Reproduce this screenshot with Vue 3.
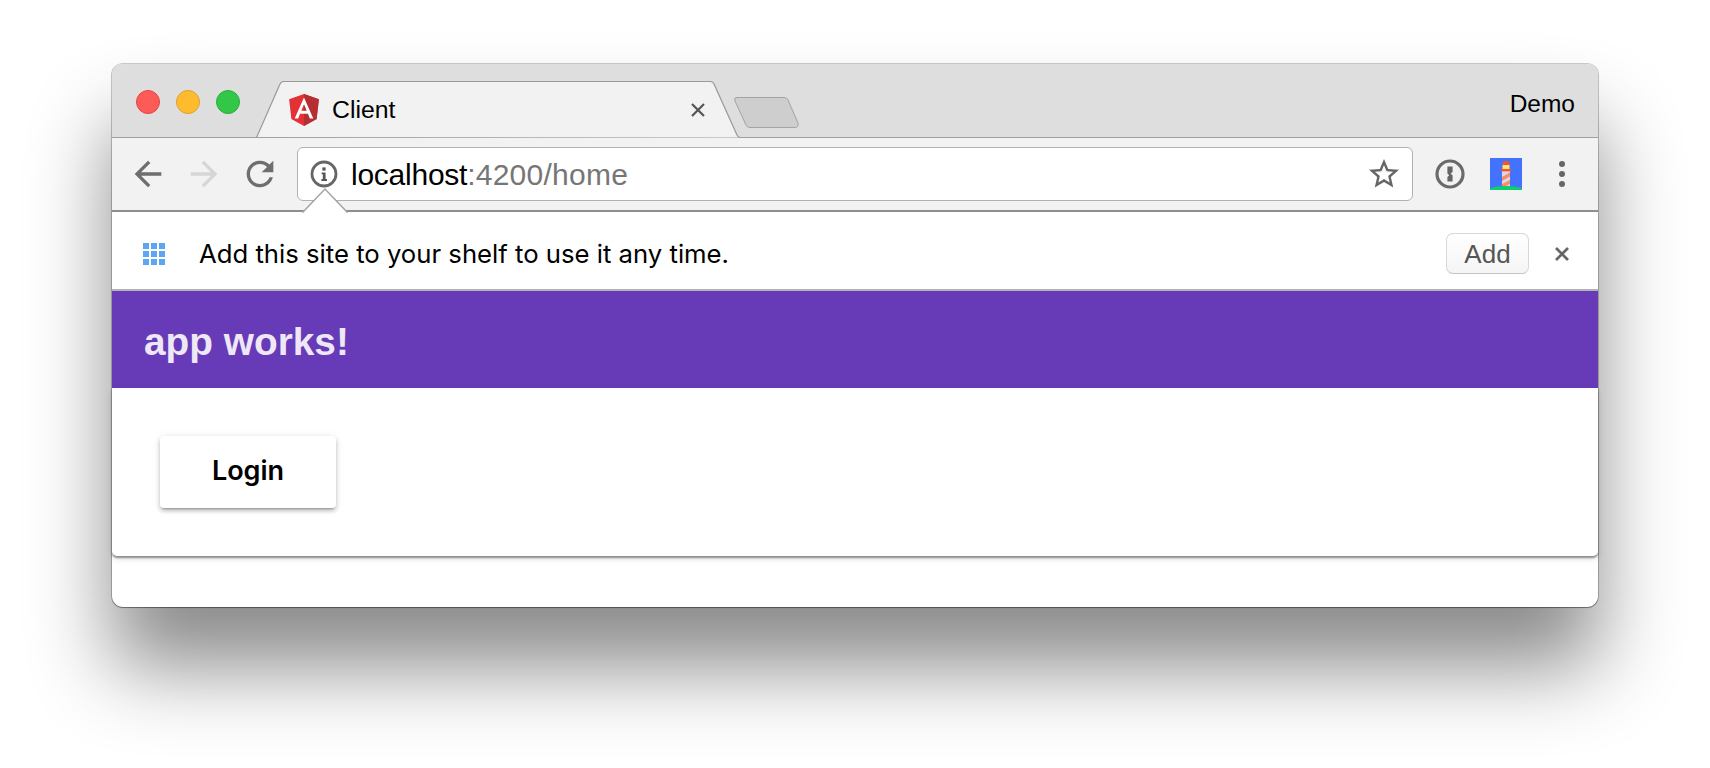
<script setup>
const cells = [0, 1, 2, 3, 4, 5, 6, 7, 8]
</script>

<template>
  <div class="page">
    <div class="window">
      <header class="titlebar">
        <div class="lights">
          <span class="light red"></span>
          <span class="light yellow"></span>
          <span class="light green"></span>
        </div>
        <div class="tab">
          <svg class="tab-shape" width="484" height="57" viewBox="0 0 484 57">
            <path d="M0 56 Q.5 56 1 55.5 L24 3 Q25 .5 28 .5 H454 Q457 .5 458 3 L481 54 Q482 56 484 56.5" fill="#f2f2f2" stroke="#999" stroke-width="1.2" />
          </svg>
          <svg class="angular" width="30" height="32" viewBox="31.9 30 186.2 200">
            <polygon fill="#e23237" points="125,30 31.9,63.2 46.1,186.3 125,230 203.9,186.3 218.1,63.2" />
            <polygon fill="#b52e31" points="125,30 125,230 203.9,186.3 218.1,63.2" />
            <path fill="#fff" d="M125 52.1L66.8 182.6h21.7l11.7-29.2h49.4l11.7 29.2h21.7L125 52.1zM142 135.4H108l17-40.9L142 135.4z" />
          </svg>
          <span class="tab-title">Client</span>
          <svg class="tab-close" width="16" height="16" viewBox="0 0 16 16">
            <path d="M2 2L14 14M14 2L2 14" stroke="#555" stroke-width="2.2" fill="none" />
          </svg>
        </div>
        <svg class="newtab" width="65" height="31" viewBox="0 0 65 31">
          <path d="M2 .5 H50 Q53 .5 54 3 L64 26 Q65 30.5 61 30.5 H16 Q13 30.5 12 28 L1 4 Q0 .5 2 .5Z" fill="#cecece" stroke="#a3a3a3" stroke-width="1" />
        </svg>
        <span class="profile">Demo</span>
      </header>

      <div class="toolbar">
        <svg class="nav" width="40" height="40" viewBox="0 0 24 24" fill="#6e6e6e">
          <path d="M20 11H7.83l5.59-5.59L12 4l-8 8 8 8 1.41-1.41L7.83 13H20v-2z" />
        </svg>
        <svg class="nav gap16" width="40" height="40" viewBox="0 0 24 24" fill="#d6d6d6">
          <path d="M4 11h12.17l-5.59-5.59L12 4l8 8-8 8-1.41-1.41L16.17 13H4v-2z" />
        </svg>
        <svg class="nav gap16" width="40" height="40" viewBox="0 0 24 24" fill="#6e6e6e">
          <path d="M17.65 6.35C16.2 4.9 14.21 4 12 4c-4.42 0-7.99 3.58-7.99 8s3.57 8 7.99 8c3.73 0 6.84-2.55 7.73-6h-2.08c-.82 2.33-3.04 4-5.65 4-3.31 0-6-2.69-6-6s2.69-6 6-6c1.66 0 3.14.69 4.22 1.78L13 11h7V4l-2.35 2.35z" />
        </svg>
        <div class="omnibox">
          <svg class="info" width="30" height="30" viewBox="0 0 30 30">
            <circle cx="15" cy="15" r="12" fill="#fff" stroke="#666" stroke-width="2.8" />
            <rect x="13.4" y="8.4" width="3.2" height="3.2" fill="#555" />
            <path d="M12.6 13.4H16.6V20H18V22H12.4V20H13.8V15.2H12.6Z" fill="#555" />
          </svg>
          <span class="url">localhost<span class="url-dim">:4200/home</span></span>
          <svg class="star" width="36" height="36" viewBox="0 0 24 24" fill="#666">
            <path d="M22 9.24l-7.19-.62L12 2 9.19 8.63 2 9.24l5.46 4.73L5.82 21 12 17.27 18.18 21l-1.63-7.03L22 9.24zM12 15.4l-3.76 2.27 1-4.28-3.32-2.88 4.38-.38L12 6.1l1.71 4.04 4.38.38-3.32 2.88 1 4.28L12 15.4z" />
          </svg>
        </div>
        <svg class="onepass" width="30" height="30" viewBox="0 0 30 30">
          <circle cx="15" cy="15" r="13" fill="none" stroke="#6a6a6a" stroke-width="3.2" />
          <path d="M12.4 7.5H17.6V13L15.6 14.6L17.6 16.4V22.5H12.4V18L14.2 16.2L12.4 14.6Z" fill="#666" />
        </svg>
        <svg class="lighthouse" width="32" height="32" viewBox="0 0 32 32">
          <rect width="32" height="32" fill="#4372ff" />
          <ellipse cx="16" cy="36" rx="22" ry="8" fill="#0cce6b" />
          <rect x="12" y="13" width="8" height="15" fill="#d5d9f5" />
          <path d="M12 19L20 14.5V18.5L12 23Z M12 26L20 22V26L16 28H12Z" fill="#ff8a5c" />
          <path d="M12.5 5.5Q12.5 3 16 3T19.5 5.5V7H12.5Z" fill="#f4581e" />
          <rect x="12.5" y="7" width="7" height="4" fill="#ffe07d" />
          <rect x="11" y="11" width="10" height="2.4" fill="#f4581e" />
        </svg>
        <div class="dots"><i></i><i></i><i></i></div>
        <svg class="pointer" width="46" height="25" viewBox="0 0 46 25">
          <path d="M0 24.5 H1 L23 1 L45 24.5 H46 V25 H0Z" fill="#fff" />
          <path d="M0 24 H1 L23 1 L45 24 H46" fill="none" stroke="#a3a3a3" stroke-width="1.4" />
        </svg>
      </div>

      <div class="shelf">
        <svg class="grid" width="22" height="22" viewBox="0 0 22 22">
          <rect v-for="c in cells" :key="c" :x="(c % 3) * 8" :y="Math.floor(c / 3) * 8" width="6" height="6" fill="#5ea5f6" />
        </svg>
        <span class="shelf-text">Add this site to your shelf to use it any time.</span>
        <button class="add">Add</button>
        <svg class="shelf-close" width="16" height="16" viewBox="0 0 16 16">
          <path d="M2 2L14 14M14 2L2 14" stroke="#666" stroke-width="2.7" fill="none" />
        </svg>
      </div>

      <div class="appbar">app works!</div>

      <main class="card">
        <button class="login">Login</button>
      </main>
      <div class="footer"></div>
    </div>
  </div>
</template>

<style>
html, body { margin: 0; background: #fff; overflow: hidden; }
</style>

<style scoped>
.page {
  height: 768px;
  box-sizing: border-box;
  padding: 64px 0 0 112px;
  background: #fff;
  font-family: "Liberation Sans", Arial, sans-serif;
  color: #000;
  overflow: hidden;
}
.window {
  width: 1486px;
  height: 543px;
  border-radius: 11px;
  background: #fff;
  display: flex;
  flex-direction: column;
  box-shadow: 0 0 0 1px rgba(0, 0, 0, .2), 0 1px 1px rgba(0, 0, 0, .3), 0 60px 82px rgba(0, 0, 0, .46);
  position: relative;
}
.titlebar {
  height: 74px;
  box-sizing: border-box;
  flex: none;
  display: flex;
  background: #dedede;
  border-bottom: 1px solid #a0a0a0;
  border-radius: 11px 11px 0 0;
}
.lights { display: flex; gap: 16px; margin: 26px 0 0 24px; align-self: flex-start; }
.light { width: 24px; height: 24px; box-sizing: border-box; border-radius: 50%; border: 1px solid; }
.red { background: #fc5b57; border-color: #e5443f; }
.yellow { background: #ffbb2e; border-color: #e0a028; }
.green { background: #33c748; border-color: #2aae3c; }
.tab {
  position: relative;
  width: 484px;
  height: 57px;
  flex: none;
  margin: 17px 0 -1px 16px;
  box-sizing: border-box;
  padding: 0 34px 0 33px;
  display: flex;
  align-items: center;
}
.tab-shape { position: absolute; left: 0; top: 0; }
.angular, .tab-title, .tab-close { position: relative; }
.tab-title { margin-left: 13px; font-size: 24.8px; line-height: 32px; }
.tab-close { margin-left: auto; }
.newtab { flex: none; margin: 33px 0 0 -6px; }
.profile { margin: 26px 23px 0 auto; font-size: 24.5px; line-height: 28px; align-self: flex-start; }
.toolbar {
  position: relative;
  height: 74px;
  box-sizing: border-box;
  flex: none;
  display: flex;
  align-items: center;
  padding: 0 16px 1px;
  background: #f2f2f2;
  border-bottom: 2px solid #8e8e8e;
}
.gap16 { margin-left: 16px; }
.nav { flex: none; }
.omnibox {
  flex: none;
  width: 1116px;
  height: 54px;
  box-sizing: border-box;
  margin-left: 17px;
  padding: 0 10px 0 11px;
  display: flex;
  align-items: center;
  background: #fff;
  border: 1px solid #b2b2b2;
  border-radius: 6px;
}
.url { margin: 2px 0 0 12px; font-size: 30px; line-height: 36px; letter-spacing: -.25px; }
.url-dim { color: #767676; letter-spacing: .25px; }
.star { margin-left: auto; }
.onepass { flex: none; margin-left: 22px; }
.lighthouse { flex: none; margin-left: 25px; }
.dots { margin-left: 37px; display: flex; flex-direction: column; gap: 4px; }
.dots i { width: 6px; height: 6px; border-radius: 50%; background: #666; display: block; }
.pointer { position: absolute; left: 190px; top: 50px; }
.shelf {
  height: 79px;
  box-sizing: border-box;
  flex: none;
  display: flex;
  align-items: center;
  padding: 6px 28px 0 31px;
  border-bottom: 2px solid #b4b4b4;
}
.shelf-text { margin-left: 34px; font-family: Inter, "Liberation Sans", sans-serif; font-size: 25.7px; line-height: 32px; }
.add {
  margin-left: auto;
  width: 83px;
  height: 41px;
  padding: 2px 0 0;
  background: linear-gradient(#fff, #f5f5f5);
  border: 1px solid #d8d8d8;
  border-bottom-color: #c4c4c4;
  border-radius: 7px;
  font: 26px "Liberation Sans", Arial, sans-serif;
  color: #555;
}
.shelf-close { margin-left: 25px; }
.appbar {
  height: 97px;
  box-sizing: border-box;
  flex: none;
  display: flex;
  align-items: center;
  padding: 4px 0 0 32px;
  background: #673ab7;
  color: #ede7f6;
  font-size: 38.8px;
  font-weight: 700;
}
.card {
  position: relative;
  height: 168px;
  box-sizing: border-box;
  flex: none;
  padding: 48px;
  background: #fff;
  border-radius: 0 0 5px 5px;
  box-shadow: 0 2px 2px rgba(0, 0, 0, .4), 0 3px 6px rgba(0, 0, 0, .12);
}
.login {
  display: block;
  width: 176px;
  height: 72px;
  padding: 0 0 4px;
  border: 0;
  border-radius: 4px;
  background: #fff;
  color: #000;
  font: 600 27px Inter, "Liberation Sans", Arial, sans-serif;
  box-shadow: 0 3px 2px -2px rgba(0, 0, 0, .25), 0 3px 4px rgba(0, 0, 0, .2), 0 1px 8px rgba(0, 0, 0, .1);
}
.footer { flex: 1; border-radius: 0 0 11px 11px; }
</style>
